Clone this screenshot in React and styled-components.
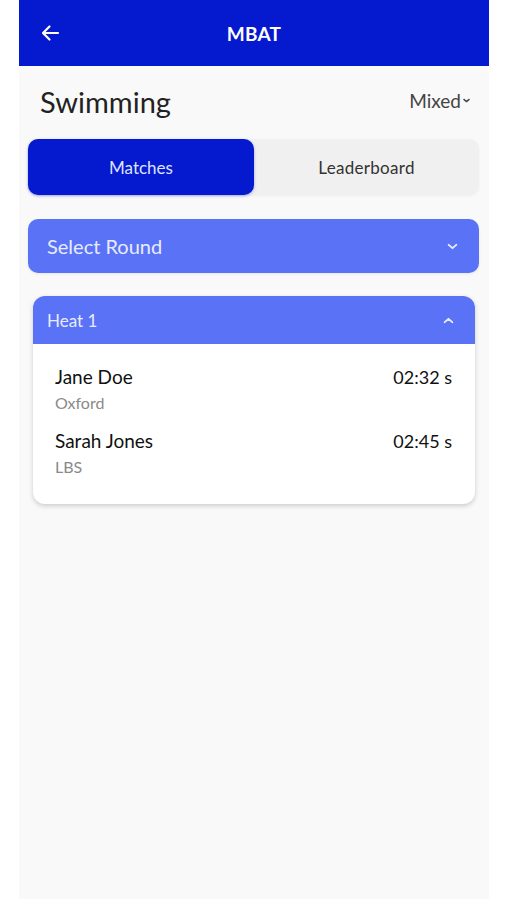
import React from 'react';
import styled, { createGlobalStyle } from 'styled-components';

const GlobalStyle = createGlobalStyle`
  body {
    margin: 0;
    background: #ffffff;
    font-family: 'Lato', 'Noto Sans', sans-serif;
  }
`;

const results = [
  { name: 'Jane Doe', club: 'Oxford', time: '02:32 s' },
  { name: 'Sarah Jones', club: 'LBS', time: '02:45 s' },
];

const Chevron = ({ up = false, size = 12, color = '#fff' }) => (
  <svg width={size} height={size} viewBox="0 0 12 12" fill="none">
    <path
      d={up ? 'M2.5 7.5L6 4.5L9.5 7.5' : 'M2.5 4.5L6 7.5L9.5 4.5'}
      stroke={color}
      strokeWidth="1.8"
      strokeLinecap="round"
      strokeLinejoin="round"
    />
  </svg>
);

const App = () => (
  <>
    <GlobalStyle />
    <Screen>
      <Header>
        <Back>
          <svg width="20" height="18" viewBox="0 0 20 18" fill="none">
            <path
              d="M18 9H3M9.5 2.5L3 9L9.5 15.5"
              stroke="#fff"
              strokeWidth="2.2"
              strokeLinecap="round"
              strokeLinejoin="round"
            />
          </svg>
        </Back>
        <Title>MBAT</Title>
        <span />
      </Header>

      <TitleRow>
        <Sport>Swimming</Sport>
        <Category>
          Mixed
          <Chevron size={9} color="#444" />
        </Category>
      </TitleRow>

      <Tabs>
        <Tab active>Matches</Tab>
        <Tab>Leaderboard</Tab>
      </Tabs>

      <Select>
        <span>Select Round</span>
        <Chevron size={13} color="#e8ebff" />
      </Select>

      <Card>
        <CardHeader>
          <span>Heat 1</span>
          <Chevron up size={13} color="#e8ebff" />
        </CardHeader>
        <CardBody>
          {results.map(r => (
            <Row key={r.name}>
              <Info>
                <Name>{r.name}</Name>
                <Club>{r.club}</Club>
              </Info>
              <Time>{r.time}</Time>
            </Row>
          ))}
        </CardBody>
      </Card>
    </Screen>
  </>
);

const Screen = styled.div`
  width: 470px;
  min-height: 899px;
  margin-left: 19px;
  background: #f9f9f9;
  display: flex;
  flex-direction: column;
`;

const Header = styled.header`
  height: 66px;
  background: #0519cf;
  display: grid;
  grid-template-columns: 1fr auto 1fr;
  align-items: center;
`;

const Back = styled.div`
  padding-left: 21px;
  display: flex;
  align-items: center;
`;

const Title = styled.h1`
  margin: 0;
  color: #fff;
  font-size: 19px;
  font-weight: 700;
  letter-spacing: 0.2px;
`;

const TitleRow = styled.div`
  display: flex;
  justify-content: space-between;
  align-items: center;
  padding: 18px 18px 0 21px;
  height: 35px;
`;

const Sport = styled.h2`
  margin: 0;
  font-size: 29px;
  font-weight: 400;
  color: #222;
  line-height: 35px;
`;

const Category = styled.div`
  display: flex;
  align-items: center;
  gap: 1px;
  font-size: 19px;
  color: #444;
  margin-top: -2px;
`;

const Tabs = styled.div`
  margin: 20px 10px 0 9px;
  height: 56px;
  display: grid;
  grid-template-columns: 226px 1fr;
  background: #f0f0f0;
  border-radius: 10px;
  box-shadow: 0 1px 3px rgba(0, 0, 0, 0.05);
`;

const Tab = styled.div`
  display: flex;
  align-items: center;
  justify-content: center;
  border-radius: 10px;
  font-size: 17px;
  letter-spacing: ${p => (p.active ? '0' : '0.3px')};
  background: ${p => (p.active ? '#0519cf' : 'transparent')};
  color: ${p => (p.active ? '#dfe3ff' : '#333')};
  box-shadow: ${p => (p.active ? '0 1px 3px rgba(5, 25, 207, 0.35)' : 'none')};
`;

const Select = styled.div`
  margin: 24px 10px 0 9px;
  height: 54px;
  padding: 0 20px 0 19px;
  display: flex;
  align-items: center;
  justify-content: space-between;
  background: #5a73f6;
  border-radius: 10px;
  color: #e8ebff;
  font-size: 20px;
  box-shadow: 0 1px 3px rgba(0, 0, 0, 0.08);
`;

const Card = styled.div`
  margin: 23px 14px 0 14px;
  background: #fff;
  border-radius: 12px;
  overflow: hidden;
  box-shadow: 0 2px 5px rgba(0, 0, 0, 0.18);
`;

const CardHeader = styled.div`
  height: 48px;
  padding: 0 20px 0 14px;
  display: flex;
  align-items: center;
  justify-content: space-between;
  background: #5a73f6;
  color: #e8ebff;
  font-size: 17px;
`;

const CardBody = styled.div`
  padding: 22px 23px 28px 22px;
  display: flex;
  flex-direction: column;
  gap: 18px;
`;

const Row = styled.div`
  display: flex;
  justify-content: space-between;
  align-items: flex-start;
`;

const Info = styled.div`
  display: flex;
  flex-direction: column;
  gap: 6px;
`;

const Name = styled.div`
  font-size: 19px;
  line-height: 22px;
  color: #111;
`;

const Club = styled.div`
  font-size: 16px;
  line-height: 18px;
  color: #8a8a8a;
`;

const Time = styled.div`
  font-size: 18px;
  line-height: 22px;
  color: #111;
`;

export default App;
